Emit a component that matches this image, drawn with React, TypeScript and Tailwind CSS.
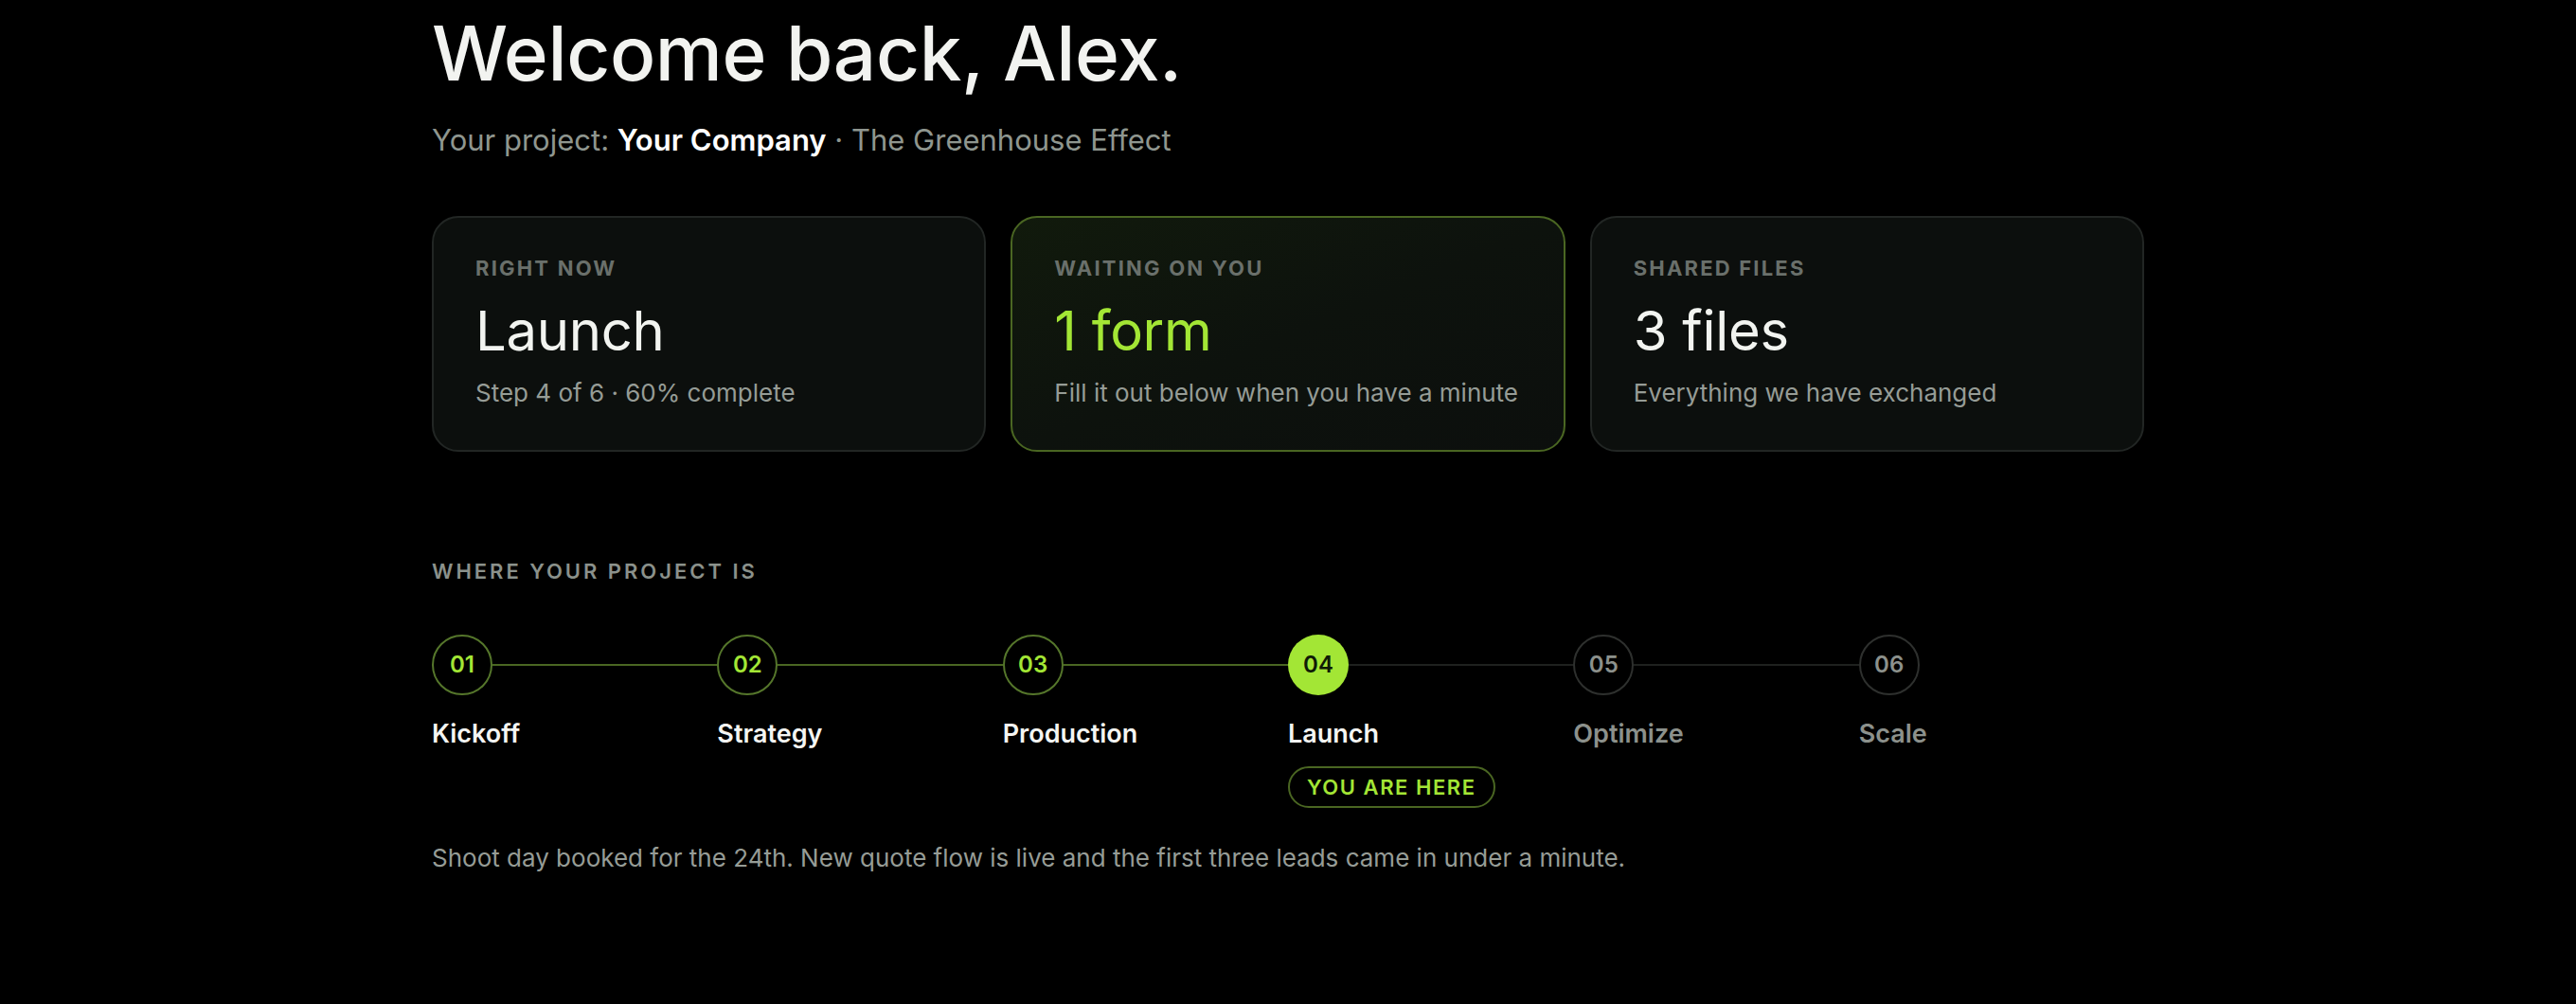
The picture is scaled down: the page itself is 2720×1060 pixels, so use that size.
import React from "react";

const steps = [
  { n: "01", label: "Kickoff", state: "done" },
  { n: "02", label: "Strategy", state: "done" },
  { n: "03", label: "Production", state: "done" },
  { n: "04", label: "Launch", state: "current" },
  { n: "05", label: "Optimize", state: "todo" },
  { n: "06", label: "Scale", state: "todo" },
];

function Card({
  label,
  value,
  sub,
  highlight,
}: {
  label: string;
  value: string;
  sub: string;
  highlight?: boolean;
}) {
  return (
    <div
      className={
        highlight
          ? "rounded-[28px] border-2 border-[#4a6622] bg-gradient-to-br from-[#111a0c] via-[#0d120d] to-[#0c0f0d] pl-[44px] pr-[40px] pt-[37px] pb-[42px]"
          : "rounded-[28px] border-2 border-[#222624] bg-[#0c0f0d] pl-[44px] pr-[40px] pt-[37px] pb-[42px]"
      }
    >
      <div className="text-[22px] leading-[32px] font-bold tracking-[0.1em] text-[#6a706b]">
        {label}
      </div>
      <div
        className={
          highlight
            ? "mt-[18px] text-[58px] leading-[64px] font-normal tracking-[-0.005em] text-[#a3e635]"
            : "mt-[18px] text-[58px] leading-[64px] font-normal tracking-[-0.005em] text-[#f2f4f0]"
        }
      >
        {value}
      </div>
      <div className="mt-[16px] text-[26px] leading-[36px] text-[#969c96]">{sub}</div>
    </div>
  );
}

export default function App() {
  return (
    <div
      className="min-h-[1060px] w-full bg-black"
      style={{ fontFamily: "Inter, 'Noto Sans', sans-serif" }}
    >
      <div className="mx-auto max-w-[1808px] pt-[16px]">
        <h1 className="text-[80px] leading-[80px] font-medium tracking-[-0.005em] text-[#f2f3f0]">
          Welcome back, Alex.
        </h1>
        <p className="mt-[32px] text-[31px] leading-[40px] text-[#8f968f]">
          Your project: <span className="font-semibold text-white">Your Company</span> · The
          Greenhouse Effect
        </p>

        <div className="mt-[60px] grid grid-cols-3 gap-[26px]">
          <Card label="RIGHT NOW" value="Launch" sub="Step 4 of 6 · 60% complete" />
          <Card
            label="WAITING ON YOU"
            value="1 form"
            sub="Fill it out below when you have a minute"
            highlight
          />
          <Card label="SHARED FILES" value="3 files" sub="Everything we have exchanged" />
        </div>

        <div className="mt-[110px] text-[22px] leading-[32px] font-semibold tracking-[0.135em] text-[#8b918b]">
          WHERE YOUR PROJECT IS
        </div>

        <div className="mt-[51px] grid grid-cols-6">
          {steps.map((s, i) => {
            const last = i === steps.length - 1;
            const lineDone = s.state === "done";
            return (
              <div key={s.n} className="flex flex-col">
                <div className="flex items-center">
                  {s.state === "current" ? (
                    <div className="flex h-[64px] w-[64px] shrink-0 items-center justify-center rounded-full bg-[#a3e635] text-[24px] font-semibold text-[#0f1a06]">
                      {s.n}
                    </div>
                  ) : s.state === "done" ? (
                    <div className="flex h-[64px] w-[64px] shrink-0 items-center justify-center rounded-full border-2 border-[#55762b] text-[24px] font-semibold text-[#a3e635]">
                      {s.n}
                    </div>
                  ) : (
                    <div className="flex h-[64px] w-[64px] shrink-0 items-center justify-center rounded-full border-2 border-[#2e302e] text-[24px] font-semibold text-[#8c918c]">
                      {s.n}
                    </div>
                  )}
                  {!last && (
                    <div
                      className={
                        lineDone
                          ? "h-[2px] flex-1 bg-[#4a6622]"
                          : "h-[2px] flex-1 bg-[#1f211f]"
                      }
                    />
                  )}
                </div>
                <div
                  className={
                    s.state === "todo"
                      ? "mt-[23px] text-[27px] leading-[36px] font-semibold text-[#8c918c]"
                      : "mt-[23px] text-[27px] leading-[36px] font-semibold text-[#f4f5f2]"
                  }
                >
                  {s.label}
                </div>
                {s.state === "current" && (
                  <div className="mt-[16px] self-start rounded-full border-2 border-[#4a6622] px-[18px] py-[4px] text-[22px] leading-[32px] font-semibold tracking-[0.07em] text-[#a3e635]">
                    YOU ARE HERE
                  </div>
                )}
              </div>
            );
          })}
        </div>

        <p className="mt-[35px] text-[26px] leading-[36px] text-[#969c96]">
          Shoot day booked for the 24th. New quote flow is live and the first three leads came in
          under a minute.
        </p>
      </div>
    </div>
  );
}
